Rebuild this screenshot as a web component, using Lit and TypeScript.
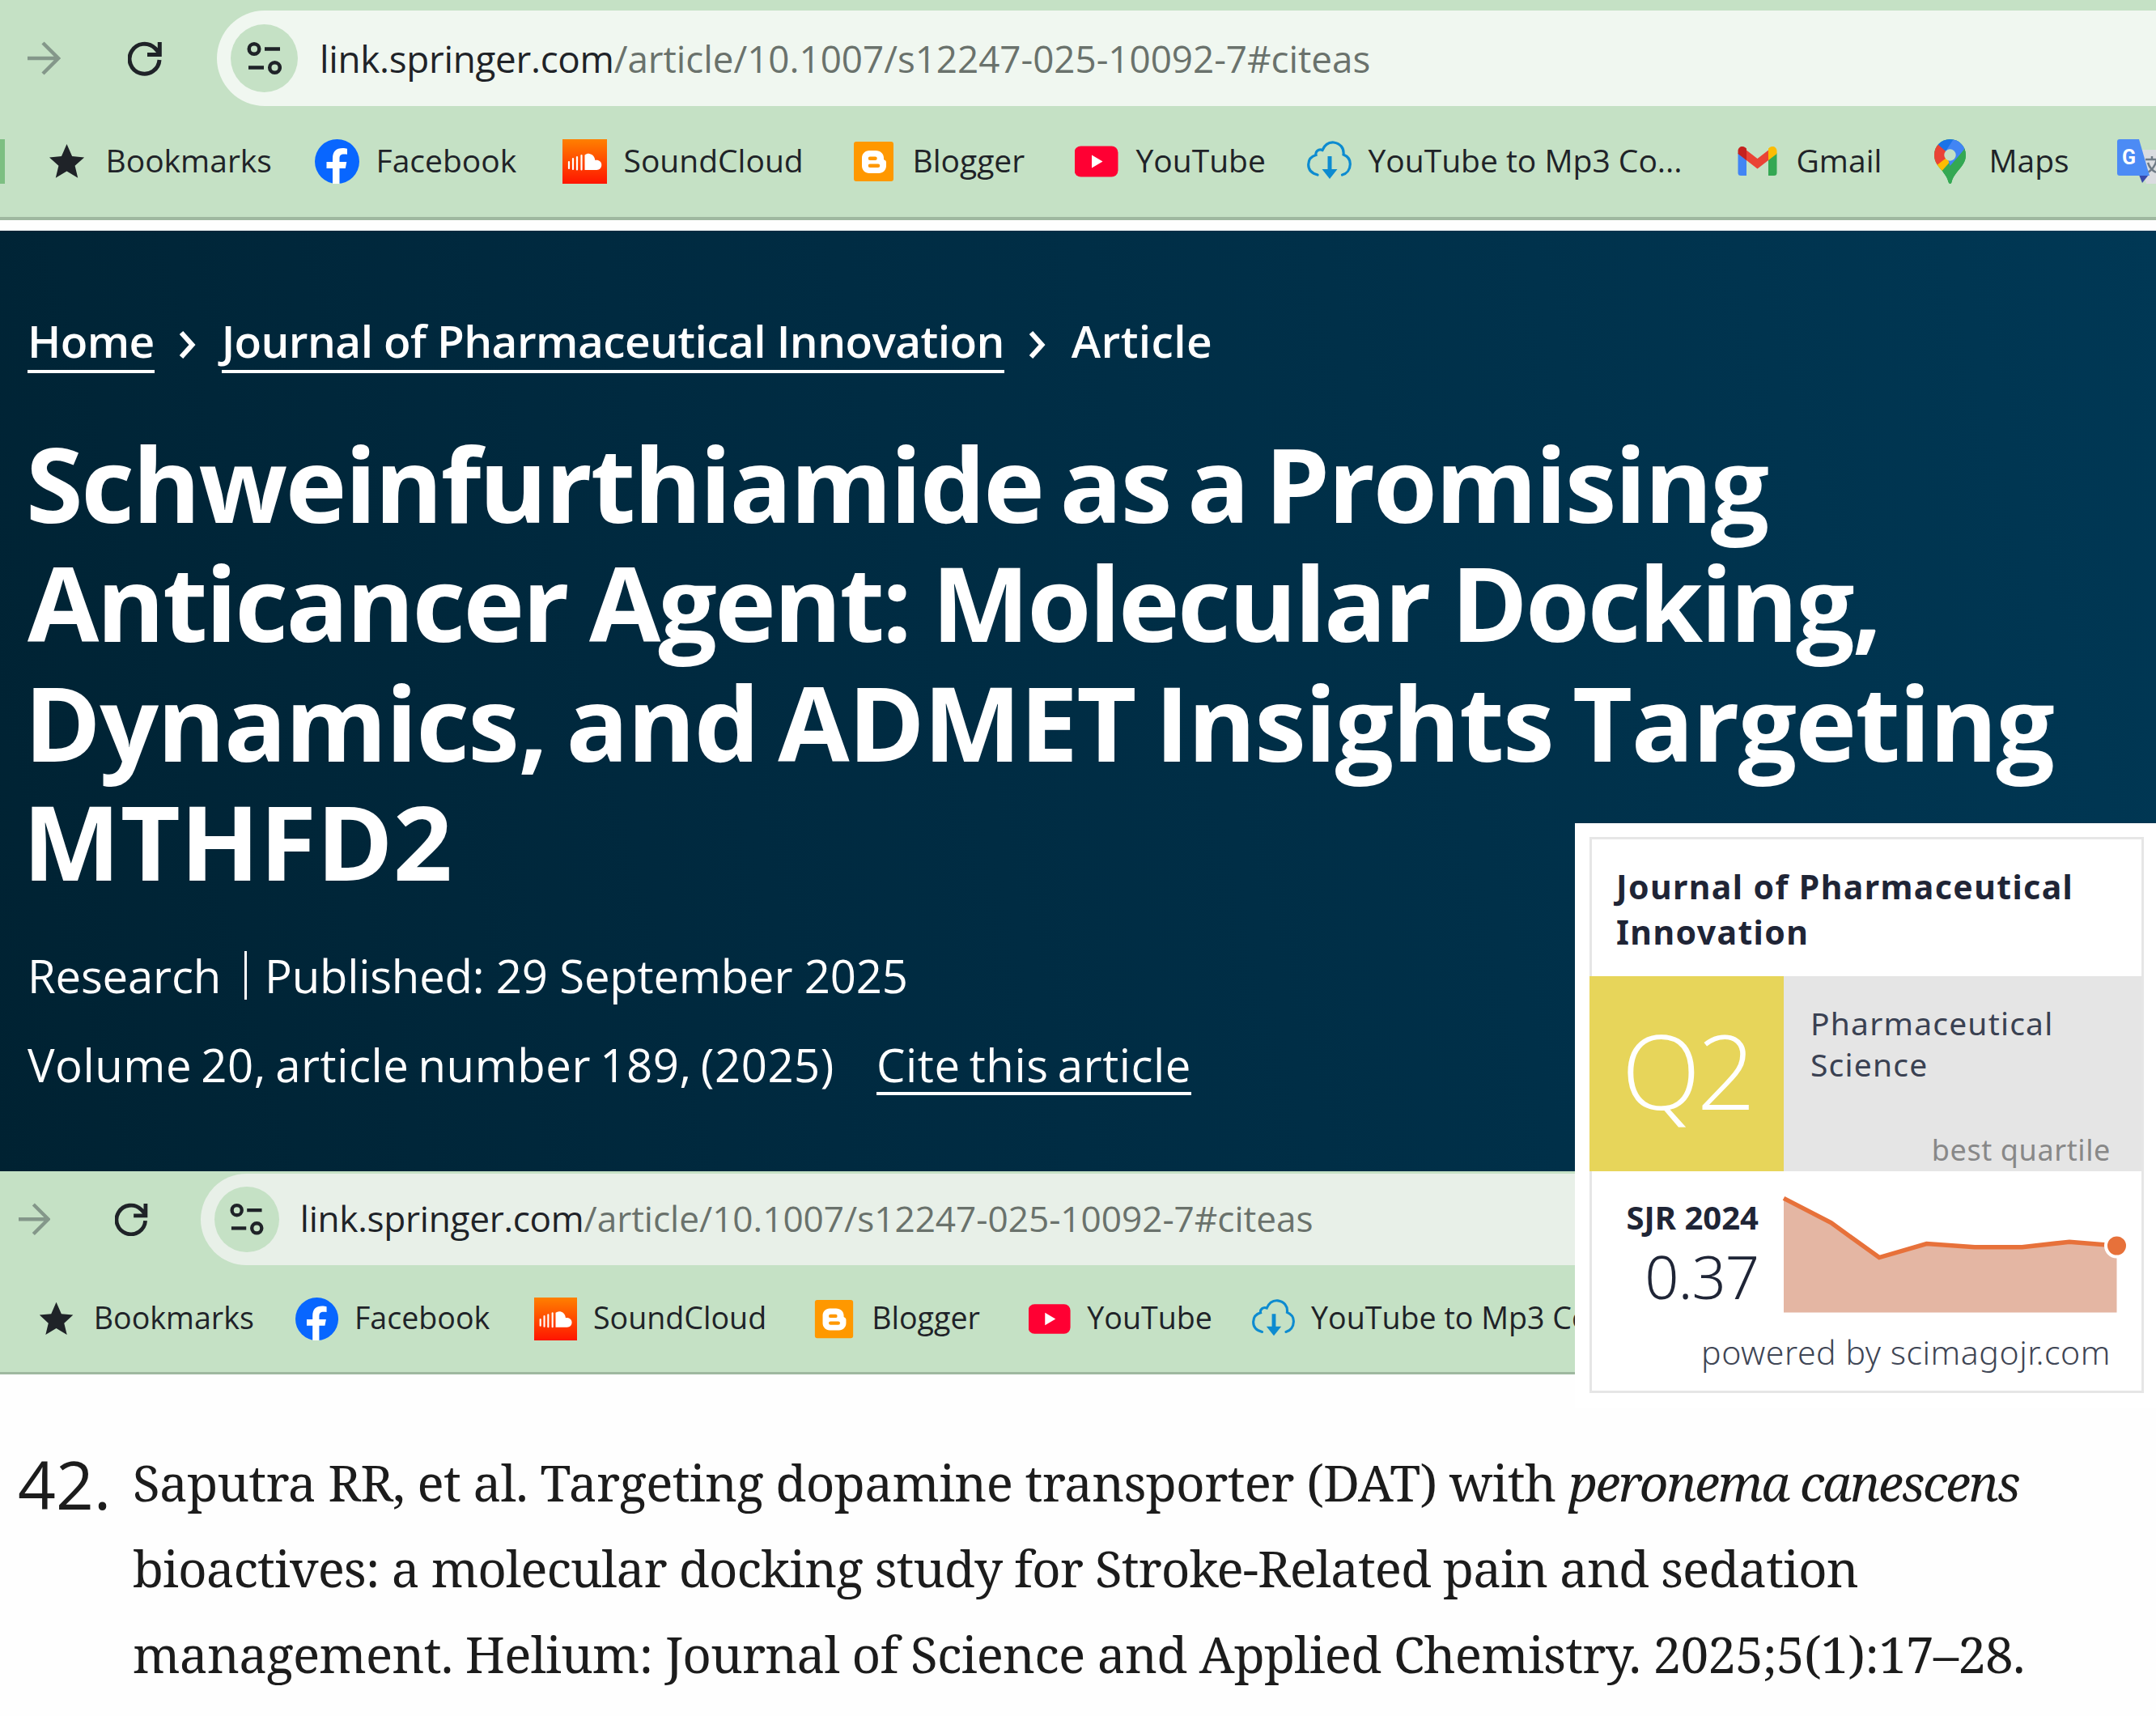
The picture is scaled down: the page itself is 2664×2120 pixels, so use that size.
import { LitElement, html, css, svg } from 'lit';
import { customElement, property } from 'lit/decorators.js';

const star = svg`<path fill="#1f2328" d="M27.5 6l6.6 15 15 1.4-11.5 10.4 3.6 15-13.7-8.3-13.7 8.3 3.6-15L6 22.400l15-1.400z"/>`;

const facebook = svg`
    <circle cx="27.500" cy="27.500" r="27.500" fill="#0866ff"/>
    <path fill="#fff" d="M22 55V36h-7.500v-8H22v-4c0-9 4-13 12.500-13 2 0 4 .3 5.500.7v7c-1-.2-2.300-.3-3.800-.3-4.200 0-5.700 1.700-5.700 5.600v4h8.800l-1.500 8h-7.300v19z"/>`;

const soundcloud = svg`
    <defs><linearGradient id="sc" x1="0" y1="0" x2="0" y2="1"><stop offset="0" stop-color="#ff8000"/><stop offset="1" stop-color="#ff1500"/></linearGradient></defs>
    <rect width="55" height="55" fill="url(#sc)"/>
    <path stroke="#fff" stroke-width="2.200" stroke-linecap="round" d="M8 28v8M13 24v13M18 22v15.500M23.500 20v17.500"/>
    <path fill="#fff" d="M27.500 19.500c2-1.500 4-2 6-1.500 4 .8 6.500 4 6.800 8 4.700-.8 8 2 8 5.800 0 3.700-2.500 6.200-6 6.200H27.500z"/>`;

const blogger = svg`
    <rect x="3" y="3" width="49" height="49" rx="3" fill="#ff9800"/>
    <path fill="#fff" fill-rule="evenodd" d="M22 14h8c6 0 10 4 10 9v1.500c0 1.500 3 1 3 4V33c0 5-4 9-9 9H22c-5 0-9-4-9-9V23c0-5 4-9 9-9zm1 7.500a2 2 0 0 0 0 4.500h6.500a2 2 0 0 0 0-4.500zm0 9a2 2 0 0 0 0 4.500h10a2 2 0 0 0 0-4.500z"/>`;

const youtube = svg`
    <rect x="-.5" y="8.500" width="54" height="38" rx="8" fill="#ff0033"/>
    <path fill="#fff" d="M21 19.500v16l13.500-8z"/>`;

const cloud = svg`
    <path fill="none" stroke="#0d8bd0" stroke-width="3.200" stroke-linecap="round" d="M13 44C5 42 1.500 37 1.700 31c.2-6 4-10 9.300-11.500-1-4 3-8 8-6C22 6.500 27 3.500 33 4c8 1 13 7 12 15 5 2 8.500 6.500 8.300 12-.2 6.500-4 11.500-9.800 13"/>
    <path fill="none" stroke="#0d8bd0" stroke-width="5" d="M28 21v20"/>
    <path fill="#0d8bd0" d="M18.500 37h19L28 49z"/>`;

const gmail = svg`
    <path fill="#4285f4" d="M3.500 17l10.500 8v20H7a3.500 3.500 0 0 1-3.500-3.500z"/>
    <path fill="#34a853" d="M51.500 17L41 25v20h7a3.500 3.500 0 0 0 3.500-3.500z"/>
    <path fill="#ea4335" d="M12 12l15.500 12L43 12v12.500L27.500 36.500 12 24.500z"/>
    <path fill="#c5221f" d="M3.500 14.500c0-5 5.500-7 9-4.200L14 11.500V26L3.500 18z"/>
    <path fill="#fbbc04" d="M51.500 14.500c0-5-5.500-7-9-4.200L41 11.500V26l10.500-8z"/>`;

const maps = svg`
    <defs><clipPath id="pin"><path d="M27.500 0C16.500 0 8 8.500 8 19.500c0 7 3 11.500 7.500 17C21 43 24 47 25.500 53c.8 2.700 3.200 2.700 4 0C31 47 34 43 39.500 36.500 44 31 47 26.500 47 19.500 47 8.500 38.500 0 27.500 0z"/></clipPath></defs>
    <g clip-path="url(#pin)">
        <rect width="55" height="55" fill="#34a853"/>
        <path fill="#fbbc04" d="M5 33L27.500 7 40 14 14 43z"/>
        <path fill="#ea4335" d="M5 31V0l8 6 14.500 13.500L10 33z"/>
        <path fill="#1a73e8" d="M12 6L27.500 19.500 42 2V-4H12z"/>
        <path fill="#4285f4" d="M33-2L50 8 27.500 33 22 15z"/>
        <path fill="#34a853" d="M47 10L25 37 14 44l20 16 20-30z"/>
    </g>
    <circle cx="27.500" cy="19.500" r="7.200" fill="#c5e1c5"/>`;

const translate = svg`
    <path fill="#dadce0" d="M24 13h29v42H36z"/>
    <path fill="none" stroke="#6f7b86" stroke-width="2.500" d="M35 25h17M43 21v4M38 29c2 6 6 10 10 12M49 25c-2 8-6 13-11 16"/>
    <path fill="#3949ab" d="M27 44h12l-8 10z"/>
    <path fill="#4c8bf5" d="M3 0h24l13 45H3a3 3 0 0 1-3-3V3a3 3 0 0 1 3-3z"/>
    <text x="6" y="31" font-family="Roboto, sans-serif" font-weight="700" font-size="25" fill="#fff">G</text>`;

const bookmarks = [
    { label: 'Bookmarks', icon: star },
    { label: 'Facebook', icon: facebook },
    { label: 'SoundCloud', icon: soundcloud },
    { label: 'Blogger', icon: blogger },
    { label: 'YouTube', icon: youtube },
    { label: 'YouTube to Mp3 Co...', icon: cloud },
    { label: 'Gmail', icon: gmail },
    { label: 'Maps', icon: maps },
    { label: '', icon: translate },
];

@customElement('browser-bar')
export class BrowserBar extends LitElement {
    // how many bookmarks fit in the bar
    @property({ type: Number }) count = bookmarks.length;

    static get styles () {
        return css`
            :host {
                display: block;
                width: 2664px;
                height: 268px;
                overflow: hidden;
                background: #c5e1c5;
                border-bottom: 4px solid #9fb8a0;
                font-family: "Open Sans", "Noto Sans", sans-serif;
                color: #1f2328;
            }
            svg {
                display: block;
                flex: none;
            }
            .nav {
                display: flex;
                align-items: center;
                height: 144px;
                padding-left: 34px;
            }
            .reload {
                margin: 0 68px 0 83px;
            }
            .omnibox {
                flex: 1;
                display: flex;
                align-items: center;
                height: 118px;
                padding-left: 17px;
                border-radius: 59px 0 0 59px;
                background: var(--omnibox, #f0f7f0);
            }
            .site {
                display: grid;
                place-items: center;
                width: 83px;
                height: 84px;
                border-radius: 50%;
                background: #c5e1c5;
            }
            .url {
                margin-left: 27px;
                font-size: 45.8px;
                line-height: 60px;
                letter-spacing: -0.03px;
                white-space: nowrap;
                color: #6a726c;
            }
            .host {
                letter-spacing: -0.3px;
                color: #1f2328;
            }
            .bookmarks {
                display: grid;
                grid-template-columns: 55px 334px 306px 357px 276px 287px 529px 238px 234px 55px;
                align-items: center;
                height: 111px;
            }
            .edge {
                width: 6px;
                height: 55px;
                background: #7dbf82;
            }
            .bookmark {
                display: flex;
                align-items: center;
                gap: 20.5px;
            }
            .label {
                margin-top: -3px;
                font-size: 39px;
                line-height: 54px;
                white-space: nowrap;
            }
        `;
    }

    render () {
        return html`
            <div class="nav">
                <svg width="41" height="42" viewBox="0 0 41 42"><path fill="none" stroke="#84978a" stroke-width="4.500" d="M0 21h37M19 2l19 19-19 19"/></svg>
                <svg class="reload" width="42" height="43" viewBox="0 0 42 43"><path fill="none" stroke="#1f2328" stroke-width="5" d="M39 23a18.500 18.500 0 1 1-5.500-14.500L39 14.500M39.300 1v15.500H24"/></svg>
                <div class="omnibox">
                    <div class="site">
                        <svg width="43" height="42" viewBox="0 0 43 42"><g fill="none" stroke="#1f2328" stroke-width="4.500"><circle cx="9" cy="9.500" r="6.300"/><path d="M22 9.500h19M2 32.500h19"/><circle cx="34.500" cy="32.500" r="6.300"/></g></svg>
                    </div>
                    <div class="url"><span class="host">link.springer.com</span>/article/10.1007/s12247-025-10092-7#citeas</div>
                </div>
            </div>
            <div class="bookmarks">
                <div class="edge"></div>
                ${bookmarks.slice(0, this.count).map((b) => html`
                    <div class="bookmark">
                        <svg width="55" height="55" viewBox="0 0 55 55">${b.icon}</svg>
                        <span class="label">${b.label}</span>
                    </div>
                `)}
            </div>
        `;
    }
}

@customElement('journal-badge')
export class JournalBadge extends LitElement {
    static get styles () {
        return css`
            :host {
                display: block;
                box-sizing: border-box;
                width: 718px;
                height: 722px;
                padding: 17px 15px 18px 18px;
                background: #fff;
                font-family: "Noto Sans", "Open Sans", sans-serif;
                color: #1f2536;
            }
            .card {
                box-sizing: border-box;
                height: 687px;
                border: 3px solid #e6e6e6;
            }
            .title {
                box-sizing: border-box;
                height: 169px;
                padding: 30px 0 0 30px;
                font-size: 41px;
                font-weight: 700;
                line-height: 56px;
                letter-spacing: 1.4px;
            }
            .quartile {
                display: flex;
                height: 241px;
                margin-left: -3px;
                background: #e5e5e5;
            }
            .rank {
                width: 240px;
                background: #e7d55a;
                color: #fff;
                font: 300 128px/231px "Open Sans", "Noto Sans", sans-serif;
                letter-spacing: -5px;
                text-align: center;
            }
            .field {
                flex: 1;
                display: flex;
                flex-direction: column;
                justify-content: space-between;
                padding: 33px 38px 6px 33px;
                font-size: 39px;
                line-height: 50.5px;
                letter-spacing: 1.2px;
                color: #3a4152;
            }
            .best {
                align-self: flex-end;
                font-size: 36px;
                line-height: 40px;
                letter-spacing: 0.6px;
                color: #888;
            }
            .score {
                display: flex;
                height: 198px;
            }
            .sjr {
                width: 207px;
                padding: 32px 1px 0 0;
                box-sizing: border-box;
                text-align: right;
                font-size: 40px;
                font-weight: 700;
                line-height: 50px;
            }
            .value {
                margin-top: 8px;
                font-size: 74px;
                font-weight: 300;
                line-height: 80px;
                letter-spacing: -1px;
            }
            .chart {
                display: block;
                margin: 23px 0 0 30px;
                overflow: visible;
            }
            .powered {
                padding-right: 38px;
                text-align: right;
                font-size: 41px;
                font-weight: 300;
                line-height: 50px;
                letter-spacing: 0.55px;
                color: #3f4655;
            }
        `;
    }

    render () {
        // one point per year, the last one gets the marker
        const points = [[0, 10.4], [58.5, 40.6], [118, 83.6], [176.5, 66.6], [236, 70.8], [294.5, 70.8], [353, 64.2], [411.5, 69]];
        const line = points.map((p) => p.join(',')).join(' ');
        return html`
            <div class="card">
                <div class="title">Journal of Pharmaceutical<br>Innovation</div>
                <div class="quartile">
                    <div class="rank">Q2</div>
                    <div class="field">
                        <div>Pharmaceutical<br>Science</div>
                        <div class="best">best quartile</div>
                    </div>
                </div>
                <div class="score">
                    <div class="sjr">SJR 2024<div class="value">0.37</div></div>
                    <svg class="chart" width="430" height="152" viewBox="0 0 430 152">
                        <polygon fill="#e4b6a3" points="${line} 411.5,151.5 0,151.5"/>
                        <polyline fill="none" stroke="#e7713a" stroke-width="5.500" points="${line}"/>
                        <circle cx="411.500" cy="69" r="13.500" fill="#e7713a" stroke="#fff" stroke-width="4"/>
                    </svg>
                </div>
                <div class="powered">powered by scimagojr.com</div>
            </div>
        `;
    }
}

@customElement('app-root')
export class AppRoot extends LitElement {
    static get styles () {
        return css`
            :host {
                display: block;
                position: relative;
                width: 2664px;
                height: 2120px;
                overflow: hidden;
                background: #fefefe;
                font-family: "Open Sans", "Noto Sans", sans-serif;
            }
            .hero {
                box-sizing: border-box;
                height: 1162px;
                margin-top: 13px;
                padding: 101px 0 0 34px;
                background: linear-gradient(75deg, #002232 0%, #002a40 35%, #003049 65%, #003855 100%);
                color: #fff;
                white-space: nowrap;
            }
            .crumbs {
                display: flex;
                align-items: flex-start;
                height: 75px;
                font-size: 55px;
                font-weight: 600;
                line-height: 70px;
                letter-spacing: -0.6px;
            }
            .link {
                padding-bottom: 1px;
                border-bottom: 4px solid #fff;
            }
            .current {
                letter-spacing: 0.4px;
            }
            .crumbs svg {
                margin: 22px 32px 0 30px;
            }
            h1 {
                margin: 62px 0 0;
                font-size: 128px;
                font-weight: 700;
                line-height: 147.4px;
            }
            .line1 {
                margin-left: -2px;
                letter-spacing: -2.3px;
                word-spacing: -10px;
            }
            .line2 {
                letter-spacing: -2.7px;
                word-spacing: -3.5px;
            }
            .line3 {
                margin-left: -4px;
                letter-spacing: -1.6px;
                word-spacing: -7.5px;
            }
            .line4 {
                margin-left: -6px;
            }
            .meta {
                display: flex;
                align-items: flex-start;
                font-size: 56.3px;
                line-height: 64px;
                letter-spacing: 0.55px;
                word-spacing: -4px;
            }
            .published {
                margin: 62px 0 48px;
                line-height: 60px;
                letter-spacing: -0.2px;
                word-spacing: 0;
            }
            .published span {
                padding-left: 22px;
                margin-left: 29px;
                border-left: 3px solid #fff;
            }
            .cite {
                margin-left: 52px;
                padding-bottom: 2px;
                border-bottom: 4px solid #fff;
            }
            .second {
                width: 1946px;
                height: 252px;
                overflow: hidden;
            }
            .shift {
                margin: -10px 0 0 -10px;
            }
            .small {
                zoom: 0.9643;
                --omnibox: #e8f0e8;
            }
            .reference {
                display: grid;
                grid-template-columns: 142px 1fr;
                padding: 79px 0 0 22px;
                line-height: 106px;
                color: #1c1c1c;
                white-space: nowrap;
            }
            .number {
                padding-top: 2px;
                font-size: 82px;
            }
            .text {
                font-family: "Noto Serif", "DejaVu Serif Condensed", serif;
                font-size: 62px;
            }
            .ref1 {
                letter-spacing: -0.7px;
            }
            .ref1 i {
                letter-spacing: -2.1px;
            }
            .ref2 {
                letter-spacing: -1px;
            }
            .ref3 {
                letter-spacing: -0.77px;
            }
            .badge {
                position: absolute;
                left: 1946px;
                top: 1017px;
            }
        `;
    }

    render () {
        const chevron = html`<svg width="21" height="36" viewBox="0 0 21 36"><path fill="none" stroke="#fff" stroke-width="6" d="M3 3l13.500 15L3 33"/></svg>`;
        return html`
            <browser-bar></browser-bar>
            <div class="hero">
                <div class="crumbs">
                    <span class="link">Home</span>${chevron}
                    <span class="link">Journal of Pharmaceutical Innovation</span>${chevron}
                    <span class="current">Article</span>
                </div>
                <h1>
                    <div class="line1">Schweinfurthiamide as a Promising</div>
                    <div class="line2">Anticancer Agent: Molecular Docking,</div>
                    <div class="line3">Dynamics, and ADMET Insights Targeting</div>
                    <div class="line4">MTHFD2</div>
                </h1>
                <div class="meta published">Research<span>Published: 29 September 2025</span></div>
                <div class="meta">Volume 20, article number 189, (2025)<span class="cite">Cite this article</span></div>
            </div>
            <div class="second">
                <div class="shift"><browser-bar class="small" count="6"></browser-bar></div>
            </div>
            <div class="reference">
                <div class="number">42.</div>
                <div class="text">
                    <div class="ref1">Saputra RR, et al. Targeting dopamine transporter (DAT) with <i>peronema canescens</i></div>
                    <div class="ref2">bioactives: a molecular docking study for Stroke-Related pain and sedation</div>
                    <div class="ref3">management. Helium: Journal of Science and Applied Chemistry. 2025;5(1):17–28.</div>
                </div>
            </div>
            <journal-badge class="badge"></journal-badge>
        `;
    }
}
